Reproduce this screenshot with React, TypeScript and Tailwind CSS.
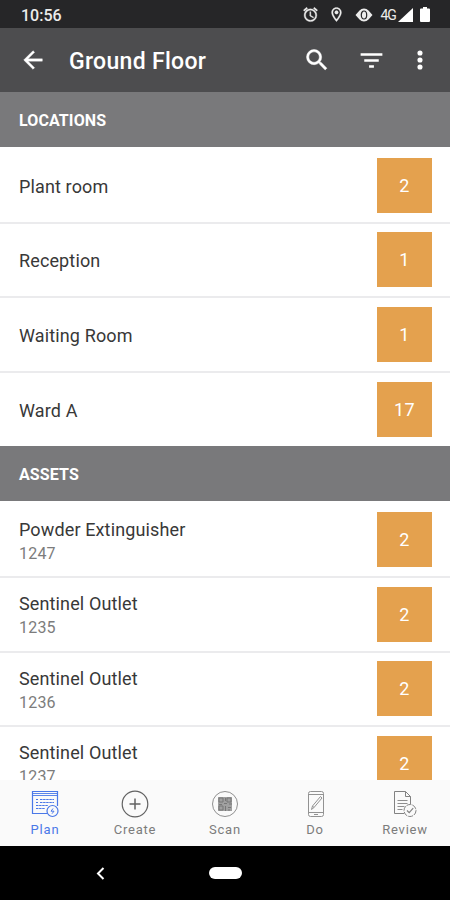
import React from 'react';

interface ListItem {
  name: string;
  code?: string;
  count: number;
}

const locations: ListItem[] = [
  { name: 'Plant room', count: 2 },
  { name: 'Reception', count: 1 },
  { name: 'Waiting Room', count: 1 },
  { name: 'Ward A', count: 17 },
];

const assets: ListItem[] = [
  { name: 'Powder Extinguisher', code: '1247', count: 2 },
  { name: 'Sentinel Outlet', code: '1235', count: 2 },
  { name: 'Sentinel Outlet', code: '1236', count: 2 },
  { name: 'Sentinel Outlet', code: '1237', count: 2 },
];

const StatusBar: React.FC = () => (
  <div className="h-7 shrink-0 bg-[#262628] text-[#ececec] flex items-center justify-between pl-[21px] pr-[20px] pt-px">
    <span className="text-[16px] font-medium leading-none pt-[2px]">10:56</span>
    <div className="flex items-center">
      <svg className="w-[17px] h-[17px]" viewBox="0 0 24 24" fill="currentColor" stroke="currentColor" strokeWidth="0.5">
        <path d="M22 5.72l-4.6-3.86-1.29 1.53 4.6 3.86L22 5.72zM7.88 3.39L6.6 1.86 2 5.71l1.29 1.53 4.59-3.85zM12.5 8H11v6l4.75 2.85.75-1.23-4-2.37V8zM12 4c-4.97 0-9 4.03-9 9s4.02 9 9 9a9 9 0 0 0 0-18zm0 16c-3.87 0-7-3.13-7-7s3.13-7 7-7 7 3.13 7 7-3.13 7-7 7z" />
      </svg>
      <svg className="w-[17px] h-[17px] ml-[9px]" viewBox="0 0 24 24" fill="currentColor" stroke="currentColor" strokeWidth="0.4">
        <path d="M12 2C8.13 2 5 5.13 5 9c0 5.25 7 13 7 13s7-7.75 7-13c0-3.87-3.13-7-7-7zM7 9c0-2.76 2.24-5 5-5s5 2.24 5 5c0 2.88-2.88 7.19-5 9.88C9.92 16.21 7 11.85 7 9z" />
        <circle cx="12" cy="9" r="2.5" />
      </svg>
      <svg className="w-[18px] h-[14px] ml-[10px]" viewBox="0 0 18 14">
        <path d="M0.5 7 L4.5 2.5 A6 6 0 0 1 13.5 2.5 L17.5 7 L13.5 11.5 A6 6 0 0 1 4.5 11.5 Z" fill="currentColor" />
        <ellipse cx="9" cy="7" rx="2.7" ry="4" fill="none" stroke="#262628" strokeWidth="1.2" />
      </svg>
      <span className="text-[14px] leading-none ml-[7px] tracking-[-0.9px] pt-px">4G</span>
      <svg className="w-[15px] h-[14px] ml-[2px]" viewBox="0 0 15 14" fill="#fff">
        <path d="M0 14 L15 0 V14 Z" />
      </svg>
      <svg className="w-[10px] h-[15px] ml-[7px]" viewBox="0 0 10 15" fill="#fff">
        <path d="M3 0h4v1.5h2a1 1 0 0 1 1 1V14a1 1 0 0 1-1 1H1a1 1 0 0 1-1-1V2.5a1 1 0 0 1 1-1h2z" />
      </svg>
    </div>
  </div>
);

const AppBar: React.FC = () => (
  <header className="h-16 shrink-0 bg-[#4d4d4f] text-white flex items-center pl-[19px] pr-[16px]">
    <svg className="w-7 h-7" viewBox="0 0 24 24" fill="currentColor" stroke="currentColor" strokeWidth="0.3">
      <path d="M20 11H7.83l5.59-5.59L12 4l-8 8 8 8 1.41-1.41L7.83 13H20v-2z" />
    </svg>
    <h1 className="flex-1 ml-[22px] text-[23px] font-medium leading-none tracking-[0.3px] pt-[3px]">Ground Floor</h1>
    <svg className="w-7 h-7" viewBox="0 0 24 24" fill="currentColor" stroke="currentColor" strokeWidth="0.4">
      <path d="M15.5 14h-.79l-.28-.27A6.47 6.47 0 0 0 16 9.5 6.5 6.5 0 1 0 9.5 16c1.61 0 3.09-.59 4.23-1.57l.27.28v.79l5 4.99L20.49 19l-4.99-5zm-6 0C7.01 14 5 11.99 5 9.5S7.01 5 9.5 5 14 7.01 14 9.5 11.99 14 9.5 14z" />
    </svg>
    <svg className="w-[29px] h-[29px] ml-[26px]" viewBox="0 0 24 24" fill="currentColor">
      <path d="M10 18h4v-2h-4v2zM3 6v2h18V6H3zm3 7h12v-2H6v2z" />
    </svg>
    <svg className="w-7 h-7 ml-[20px]" viewBox="0 0 24 24" fill="currentColor">
      <circle cx="12" cy="6" r="2.2" />
      <circle cx="12" cy="12" r="2.2" />
      <circle cx="12" cy="18" r="2.2" />
    </svg>
  </header>
);

const Section: React.FC<{ title: string; items: ListItem[] }> = ({ title, items }) => (
  <section>
    <h2 className="h-[55px] bg-[#79797b] text-white text-[16px] font-bold tracking-[0.1px] flex items-center pl-[19px] pt-[2px]">
      {title}
    </h2>
    <ul className="pb-px">
      {items.map((item, i) => (
        <li
          key={i}
          className="h-[74.6px] flex items-center justify-between pl-[19px] pr-[18px] border-t-2 border-[#ebebed] first:border-transparent"
        >
          <div className="pt-[3px]">
            <div className="text-[18px] leading-6 tracking-[0.13px] text-[#383838]">{item.name}</div>
            {item.code && <div className="text-[16px] leading-[23px] tracking-[0.2px] text-[#7c7c7c]">{item.code}</div>}
          </div>
          <div className="size-[55px] bg-[#e4a14e] text-white text-[18px] tracking-[0.3px] flex items-center justify-center">
            {item.count}
          </div>
        </li>
      ))}
    </ul>
  </section>
);

const PlanIcon = () => (
  <svg className="size-7" viewBox="0 0 28 28" fill="none" stroke="currentColor">
    <path d="M17 23.5H1.5V1.5H26.5V16" strokeWidth="1.2" />
    <path d="M1.5 3.5H26.5M1.5 5.5H26.5" strokeWidth="0.9" />
    <path d="M5 9.5h2M9 9.5h14M5 12.5h2M9 12.5h14M5 15.5h12M5 18.5h9" strokeDasharray="2.5 0.6" />
    <circle cx="21.5" cy="21" r="5.5" fill="#fafafa" strokeWidth="1.2" />
    <path d="M22 18.5l-2 2.7h3l-2 2.5" />
  </svg>
);

const CreateIcon = () => (
  <svg className="size-7" viewBox="0 0 28 28" fill="none" stroke="#626262" strokeWidth="1.2">
    <circle cx="14" cy="14" r="12.8" />
    <path d="M14 8.5v11M8.5 14h11" strokeWidth="1.5" />
  </svg>
);

const ScanIcon = () => (
  <svg className="size-7" viewBox="0 0 28 28" fill="none" stroke="#909090">
    <circle cx="14" cy="14" r="12.5" />
    <path d="M7 7h14v14H7z" fill="#a0a0a0" stroke="none" />
    <path d="M8 8h4v4H8zM16 8h4v4h-4zM8 16h4v4H8zM14.5 8v3M13 13.5h3M8 14.5h3M18 14h3M14.5 16v5M17 17.5h3M17 20h2" stroke="#777" />
  </svg>
);

const DoIcon = () => (
  <svg className="size-7" viewBox="0 0 28 28" fill="none" stroke="#929292">
    <rect x="7.5" y="1.5" width="15" height="25" rx="2" />
    <path d="M7.5 4.5h15M7.5 22.5h15M13 24.5h4" />
    <path d="M10.5 19.5l1-3.5 8-9.5 1.5 1.5-8 9.5zM11.5 16l1.5 1.5" />
  </svg>
);

const ReviewIcon = () => (
  <svg className="size-7" viewBox="0 0 28 28" fill="none" stroke="#828282">
    <path d="M13 23.5H3.5V1.5h11l5 5V14M14.5 1.5v5h5" />
    <path d="M6.5 10.5h10M6.5 13.5h10M6.5 16.5h7M6.5 19.5h5" strokeWidth="0.9" />
    <circle cx="19" cy="20.5" r="6" fill="#fafafa" strokeDasharray="5 1" />
    <path d="M16 20.5l2.2 2.2 4-4.5" strokeWidth="1.2" />
  </svg>
);

const tabs = [
  { label: 'Plan', icon: <PlanIcon />, active: true },
  { label: 'Create', icon: <CreateIcon /> },
  { label: 'Scan', icon: <ScanIcon /> },
  { label: 'Do', icon: <DoIcon /> },
  { label: 'Review', icon: <ReviewIcon /> },
];

const TabBar: React.FC = () => (
  <nav className="h-[66px] shrink-0 bg-[#fafafa] grid grid-cols-5">
    {tabs.map(({ label, icon, active }) => (
      <button
        key={label}
        className={
          active
            ? 'flex flex-col items-center pt-[10px] text-[#4a78e8]'
            : 'flex flex-col items-center pt-[10px] text-[#7c7c7c]'
        }
      >
        {icon}
        <span className="text-[13px] leading-4 tracking-[0.8px] mt-1">{label}</span>
      </button>
    ))}
  </nav>
);

const SystemNav: React.FC = () => (
  <div className="h-[54px] shrink-0 bg-black grid grid-cols-[200px_50px_200px] items-center justify-items-center">
    <svg className="w-[9px] h-[13px]" viewBox="0 0 9 13" fill="none" stroke="#fff" strokeWidth="2">
      <path d="M7.5 1L2 6.5 7.5 12" />
    </svg>
    <div className="w-[33px] h-3 rounded-full bg-white" />
  </div>
);

const App: React.FC = () => {
  return (
    <div className="w-[450px] h-[900px] flex flex-col overflow-hidden bg-white font-['Roboto',sans-serif]">
      <StatusBar />
      <AppBar />
      <main className="flex-1 min-h-0 overflow-hidden">
        <Section title="LOCATIONS" items={locations} />
        <Section title="ASSETS" items={assets} />
      </main>
      <TabBar />
      <SystemNav />
    </div>
  );
};

export default App;
